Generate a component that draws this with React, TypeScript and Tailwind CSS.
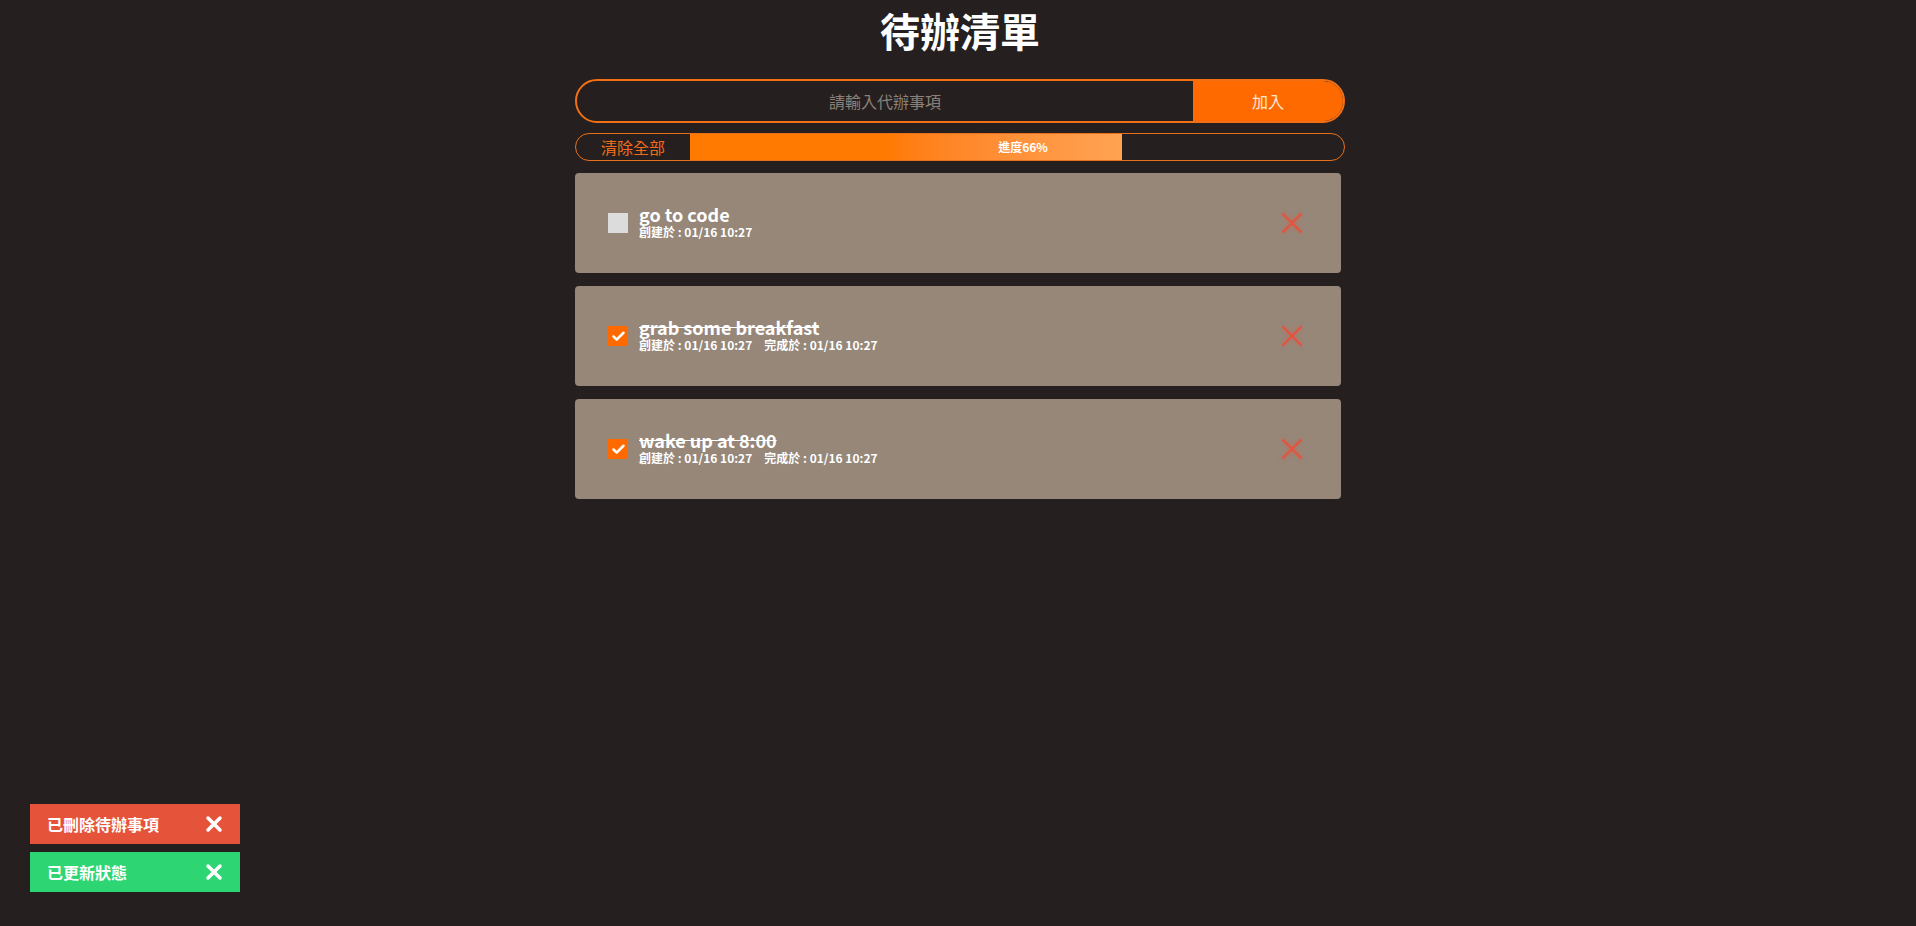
import { Check, X } from 'lucide-react';

type Todo = {
  id: number;
  title: string;
  created: string;
  done?: string;
};

const todos: Todo[] = [
  { id: 1, title: 'go to code', created: '01/16 10:27' },
  { id: 2, title: 'grab some breakfast', created: '01/16 10:27', done: '01/16 10:27' },
  { id: 3, title: 'wake up at 8:00', created: '01/16 10:27', done: '01/16 10:27' },
];

const font = { fontFamily: '"Noto Sans CJK TC", "Noto Sans", sans-serif' };

function TodoCard({ todo }: { todo: Todo }) {
  const checked = !!todo.done;
  return (
    <div className="flex h-[100px] w-[766px] items-center rounded-[4px] bg-[#968779] pl-[33px] pr-[38px]">
      {checked ? (
        <div className="flex h-5 w-5 items-center justify-center bg-[#ff6a00]">
          <Check className="h-[15px] w-[15px] text-white" strokeWidth={4} />
        </div>
      ) : (
        <div className="h-5 w-5 bg-[#dcdcdc]" />
      )}
      <div className="ml-[11px] flex flex-col pb-[4px] text-white">
        <span className={`text-[18px] font-semibold leading-[22px] ${checked ? 'line-through' : ''}`}>
          {todo.title}
        </span>
        <span className="text-[12px] font-bold leading-[14px]">
          創建於 : {todo.created}
          {todo.done && <span className="ml-[12px]">完成於 : {todo.done}</span>}
        </span>
      </div>
      <button className="ml-auto flex h-[22px] w-[22px] items-center justify-center">
        <svg width="22" height="22" viewBox="0 0 22 22" className="drop-shadow-[0_0_2px_rgba(240,80,60,0.6)]">
          <path d="M2 2 L20 20 M20 2 L2 20" stroke="#e8523c" strokeWidth="2" strokeLinecap="round" />
        </svg>
      </button>
    </div>
  );
}

function Toast({ text, color }: { text: string; color: string }) {
  return (
    <div className={`flex h-10 w-[210px] items-center justify-between pl-[17px] pr-[14px] ${color}`}>
      <span className="text-[16px] font-bold text-white">{text}</span>
      <X className="h-[24px] w-[24px] text-white" strokeWidth={3.5} />
    </div>
  );
}

export default function App() {
  const progress = 66;
  return (
    <div className="min-h-[926px] bg-[#25201f] pl-1" style={font}>
      <div className="mx-auto flex w-[770px] flex-col items-center">
        <h1 className="mb-[19px] text-[40px] font-bold leading-[60px] text-white">待辦清單</h1>

        <div className="flex h-[44px] w-full overflow-hidden rounded-full border-2 border-[#f27013]">
          <input
            placeholder="請輸入代辦事項"
            className="flex-1 bg-transparent text-center text-[16px] text-white outline-none placeholder:text-[#8c817a]"
          />
          <button className="w-[150px] bg-[#ff6a00] text-[16px] text-[#fde6d6]">加入</button>
        </div>

        <div className="mt-[10px] flex h-[28px] w-full overflow-hidden rounded-full border border-[#e8701a]">
          <button className="w-[114px] shrink-0 text-[16px] leading-none text-[#f26a1b]">清除全部</button>
          <div className="relative flex-1">
            <div
              className="h-full bg-gradient-to-r from-[#ff7a00] from-45% to-[#ffa352]"
              style={{ width: `${progress}%` }}
            />
            <span className="absolute inset-0 flex items-center justify-center pl-[12px] text-[12px] font-bold text-white">
              進度{progress}%
            </span>
          </div>
        </div>

        <div className="mt-[12px] flex w-full flex-col gap-[13px]">
          {todos.map((t) => (
            <TodoCard key={t.id} todo={t} />
          ))}
        </div>
      </div>

      <div className="fixed bottom-[34px] left-[30px] flex flex-col gap-2">
        <Toast text="已刪除待辦事項" color="bg-[#e5533b]" />
        <Toast text="已更新狀態" color="bg-[#2ed573]" />
      </div>
    </div>
  );
}
